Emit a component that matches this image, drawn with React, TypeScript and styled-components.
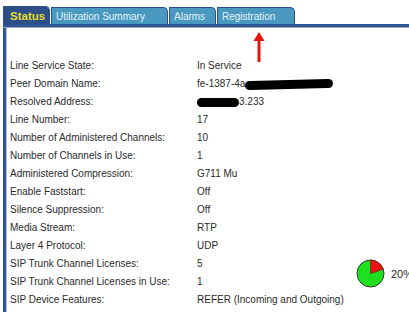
import React from "react";
import styled, { createGlobalStyle } from "styled-components";

const GlobalStyle = createGlobalStyle`
  html, body {
    margin: 0;
    padding: 0;
    background: #ffffff;
  }
  body {
    font-family: "Liberation Sans", Arial, sans-serif;
    color: #2a2a2a;
  }
`;

const Page = styled.div`
  width: 409px;
  height: 312px;
  overflow: hidden;
  padding-top: 6px;
  box-sizing: border-box;
`;

const TabStrip = styled.div`
  display: flex;
  align-items: flex-end;
  gap: 1px;
  padding-left: 3px;
  height: 18px;
`;

const Tab = styled.div<{ $active?: boolean; $w: number }>`
  box-sizing: border-box;
  width: ${(p) => p.$w}px;
  height: ${(p) => (p.$active ? "18px" : "17px")};
  display: flex;
  align-items: center;
  padding-left: ${(p) => (p.$active ? "6px" : "4px")};
  background: ${(p) => (p.$active ? "#2c4f88" : "#4898bf")};
  border: 1px solid #2c4f88;
  border-bottom: none;
  border-top-right-radius: 5px;
  color: ${(p) => (p.$active ? "#e6dc2a" : "#e4f2fa")};
  font-size: ${(p) => (p.$active ? "11.5px" : "10px")};
  font-weight: ${(p) => (p.$active ? "bold" : "normal")};
  white-space: nowrap;
`;

const TabBar = styled.div`
  margin-left: 3px;
  height: 3px;
  background: #2f5590;
  border-bottom: 1px solid #9aa6b6;
`;

const Panel = styled.div`
  position: relative;
  margin-left: 3px;
  border-left: 3px solid #2f5590;
  box-shadow: inset 1px 0 0 #b8c4d6;
  padding: 29px 0 0 4px;
  height: 290px;
  box-sizing: border-box;
`;

const Arrow = styled.svg`
  position: absolute;
  left: 247px;
  top: 4px;
`;

const Grid = styled.div`
  display: grid;
  grid-template-columns: 187px 159px auto;
  grid-auto-rows: 18px;
  font-size: 10px;
  line-height: 18px;
`;

const Label = styled.div`
  grid-column: 1;
  white-space: nowrap;
`;

const Value = styled.div`
  grid-column: 2;
  white-space: nowrap;
  display: flex;
  align-items: center;
`;

const Redact = styled.span<{ $w: number; $tilt: number }>`
  display: inline-block;
  width: ${(p) => p.$w}px;
  height: 9px;
  background: #000;
  border-radius: 5px;
  transform: rotate(${(p) => p.$tilt}deg);
  filter: blur(0.4px);
`;

const PieCell = styled.div`
  grid-column: 3;
  grid-row: 12 / span 2;
  display: flex;
  align-items: center;
  gap: 6px;
`;

const PieText = styled.span`
  font-size: 11px;
  margin-top: 2px;
`;

interface Row {
  label: string;
  value: React.ReactNode;
}

const tabs = [
  { name: "Status", w: 47 },
  { name: "Utilization Summary", w: 117 },
  { name: "Alarms", w: 47 },
  { name: "Registration", w: 78 },
];

export default function App() {
  const rows: Row[] = [
    { label: "Line Service State:", value: "In Service" },
    {
      label: "Peer Domain Name:",
      value: (
        <>
          fe-1387-4a<Redact $w={88} $tilt={-1.5} />
        </>
      ),
    },
    {
      label: "Resolved Address:",
      value: (
        <>
          <Redact $w={42} $tilt={0} />
          3.233
        </>
      ),
    },
    { label: "Line Number:", value: "17" },
    { label: "Number of Administered Channels:", value: "10" },
    { label: "Number of Channels in Use:", value: "1" },
    { label: "Administered Compression:", value: "G711 Mu" },
    { label: "Enable Faststart:", value: "Off" },
    { label: "Silence Suppression:", value: "Off" },
    { label: "Media Stream:", value: "RTP" },
    { label: "Layer 4 Protocol:", value: "UDP" },
    { label: "SIP Trunk Channel Licenses:", value: "5" },
    { label: "SIP Trunk Channel Licenses in Use:", value: "1" },
    { label: "SIP Device Features:", value: "REFER (Incoming and Outgoing)" },
  ];

  return (
    <>
      <GlobalStyle />
      <Page>
        <TabStrip>
          {tabs.map((t, i) => (
            <Tab key={t.name} $active={i === 0} $w={t.w}>
              {t.name}
            </Tab>
          ))}
        </TabStrip>
        <TabBar />
        <Panel>
          <Arrow width="12" height="30" viewBox="0 0 12 30">
            <path d="M6 0 L11.5 9 L7.5 9 L7.5 30 L4.5 30 L4.5 9 L0.5 9 Z" fill="#e3150f" />
          </Arrow>
          <Grid>
            {rows.map((r, i) => (
              <React.Fragment key={i}>
                <Label>{r.label}</Label>
                <Value>{r.value}</Value>
              </React.Fragment>
            ))}
            <PieCell>
              <svg width="29" height="29" viewBox="0 0 29 29">
                <circle cx="14.5" cy="14.5" r="13.5" fill="#1fe01f" stroke="#2f3a2f" strokeWidth="1" />
                <path d="M14.5 14.5 L14.5 1 A13.5 13.5 0 0 1 27.3 10.3 Z" fill="#ee1111" stroke="#5a1a1a" strokeWidth="0.6" />
              </svg>
              <PieText>20%</PieText>
            </PieCell>
          </Grid>
        </Panel>
      </Page>
    </>
  );
}
